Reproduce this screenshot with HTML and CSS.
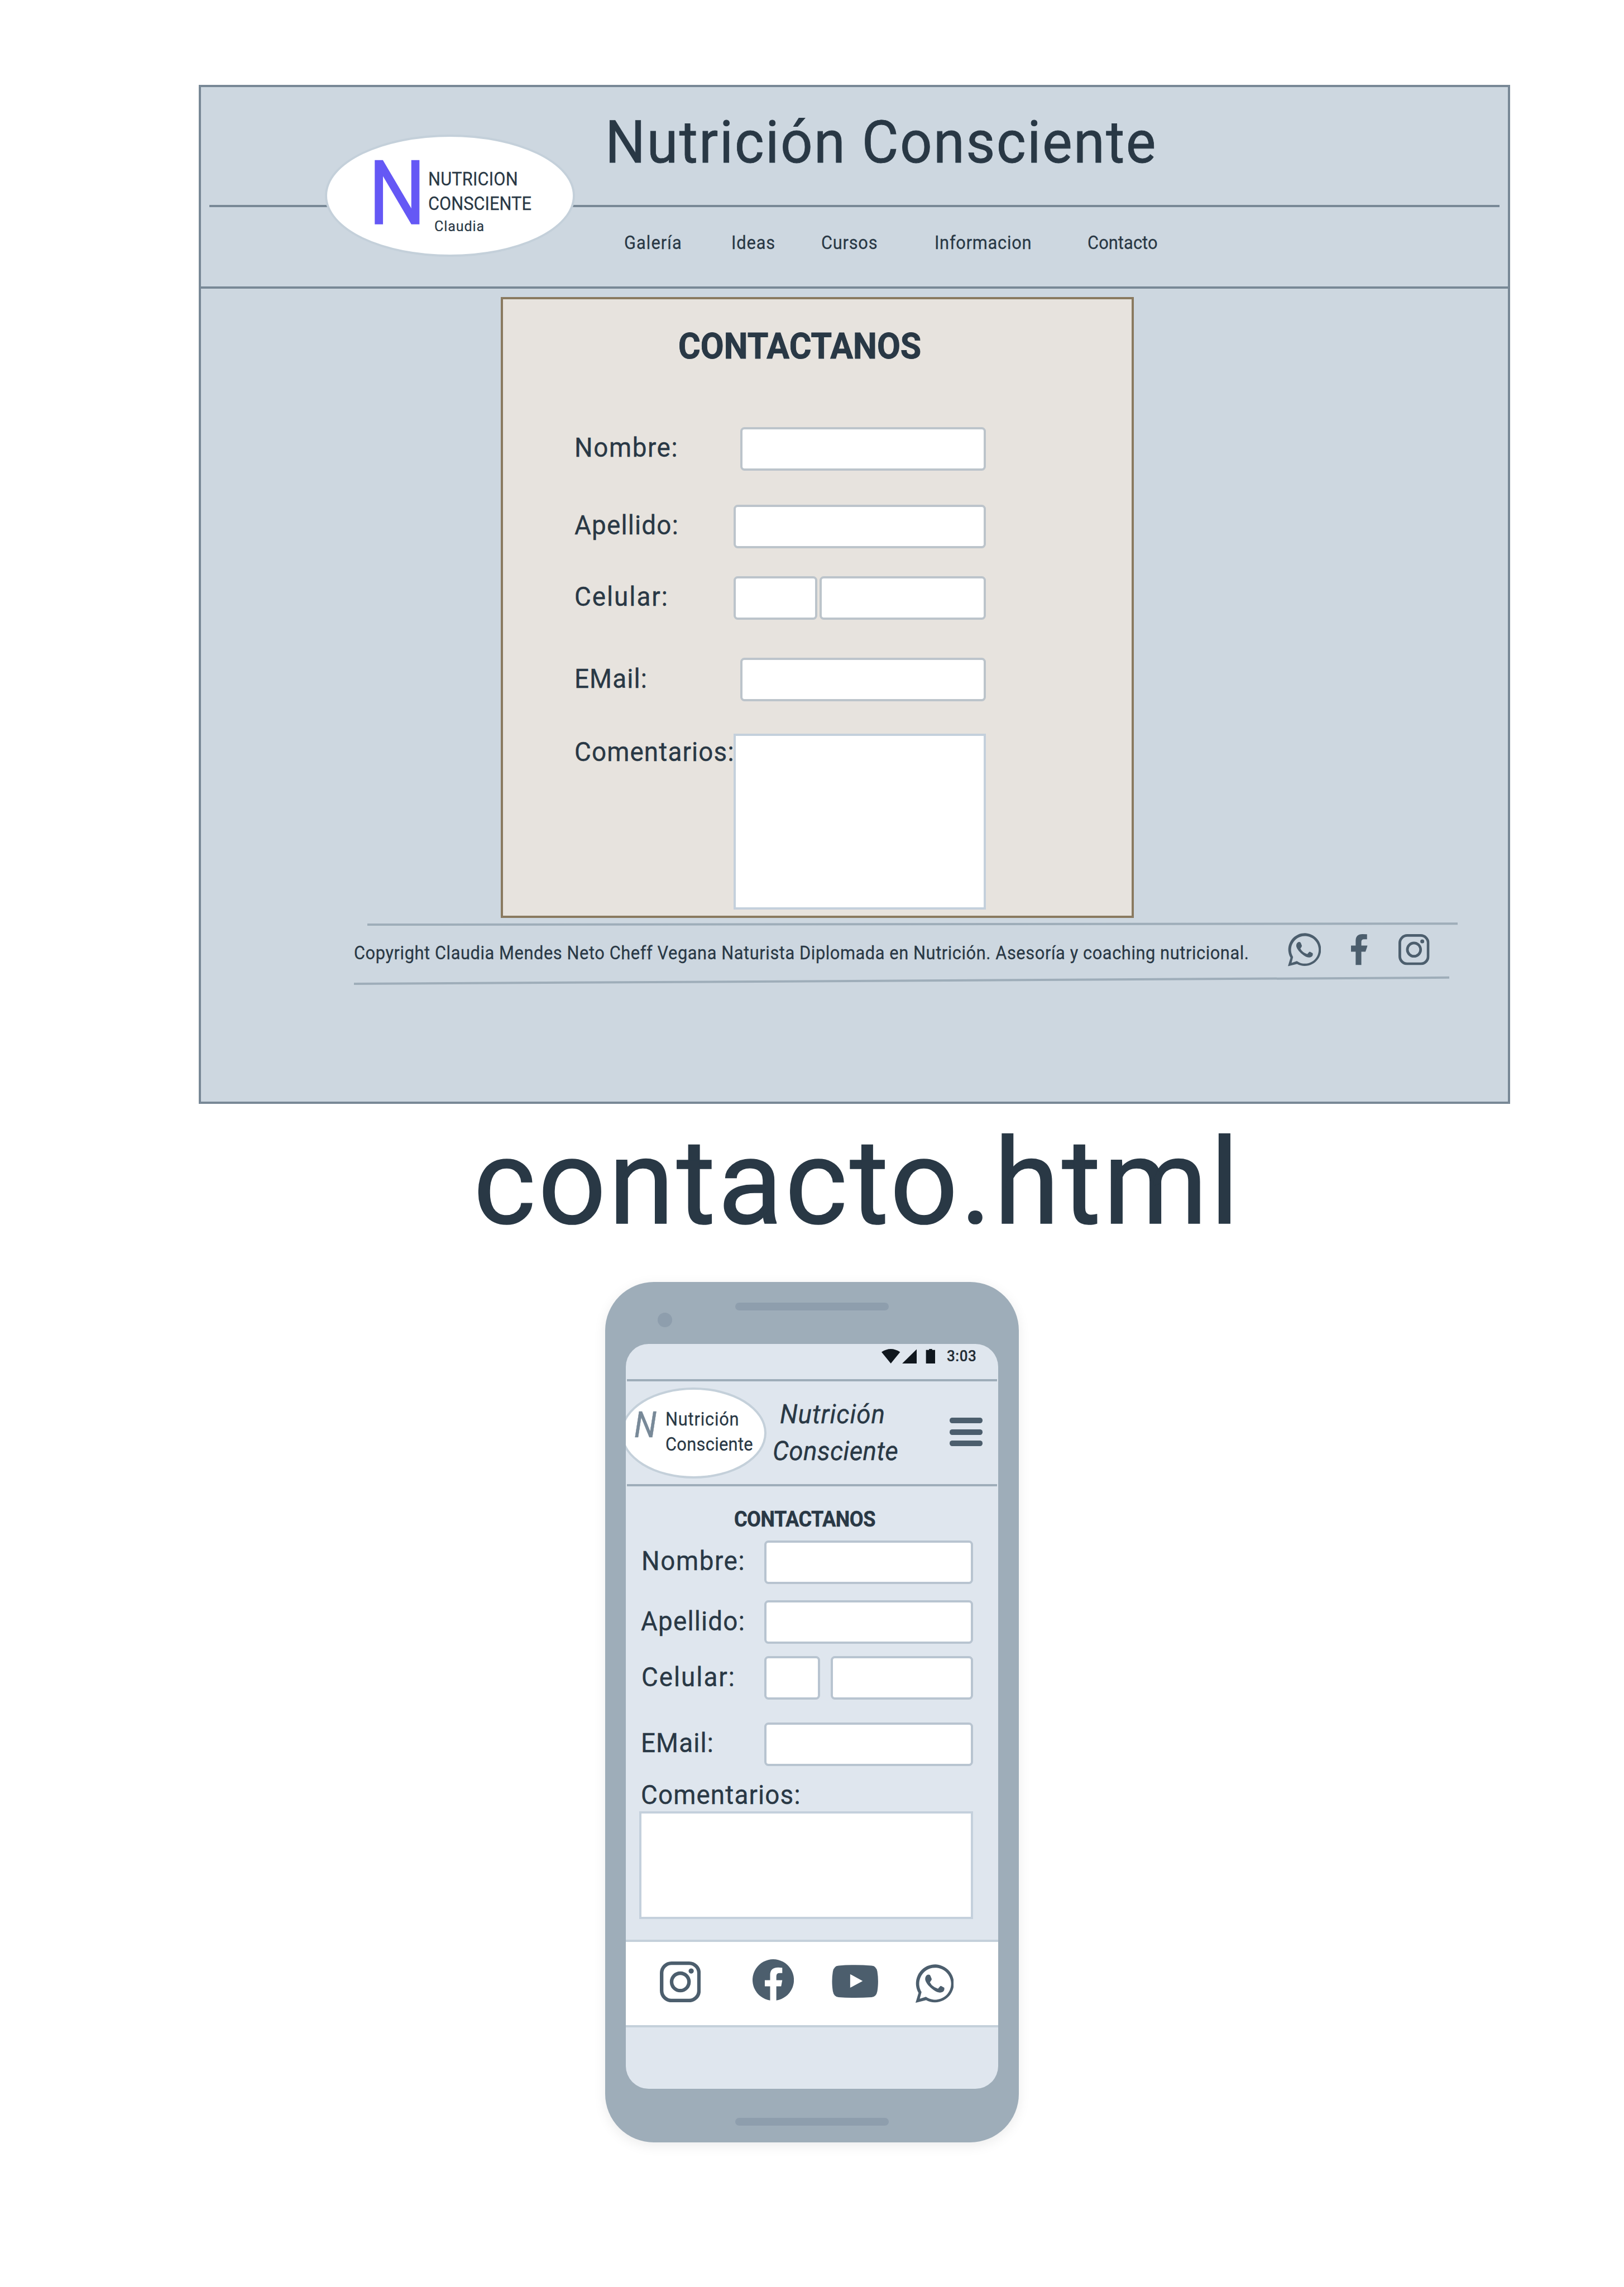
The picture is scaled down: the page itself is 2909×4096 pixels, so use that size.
FILE: index.html
```html
<!DOCTYPE html>
<html lang="es">
<head>
<meta charset="utf-8">
<title>contacto.html</title>
<link rel="stylesheet" href="styles.css">
</head>
<body>
<svg class="symbols" aria-hidden="true">
  <symbol id="whatsapp" viewBox="0 0 64 64.5">
    <path fill-rule="evenodd" d="M0 64.3 5 47.9A31.7 31.7 0 1 1 17.6 60ZM7 57.7 17.3 54.3A26.7 26.7 0 1 0 10 46.5Z"/>
    <path d="M20 17.5Q24 16.3 25 19.5L27 24.5Q27.3 26 24 30 28 38 37.5 40.8L41 36.8Q42 35.8 43.5 36.6L48 39.2Q49 45 44 46.7 38 48.8 30 43 19 35 16.3 26.5 15.3 20 20 17.5Z"/>
  </symbol>
  <symbol id="instagram" viewBox="0 0 60 60">
    <rect x="2.6" y="2.6" width="54.8" height="54.8" rx="14.5" fill="none" stroke="currentColor" stroke-width="5.2"/>
    <circle cx="30" cy="30" r="12.8" fill="none" stroke="currentColor" stroke-width="5.2"/>
    <circle cx="46" cy="14" r="3.8"/>
  </symbol>
  <symbol id="facebook-f" viewBox="0 0 32 60">
    <path d="M9 60V34H0V22H9V13Q9 0 22 0L31 .4V10H25Q20 10 20 15V22H32L28 34H20V60Z"/>
  </symbol>
  <symbol id="facebook" viewBox="0 0 80 80">
    <path d="M34 79.6A40 40 0 1 1 46 79.6V52.3H55.3L57.5 40.5H46V33Q46 26.7 52 26.7H57.5V16.5Q53 15.7 49 15.9 34 16.5 34 30V40.5H23.7V52.3H34Z"/>
  </symbol>
  <symbol id="youtube" viewBox="0 0 90 64">
    <path fill-rule="evenodd" d="M13 1.5Q45-1 77 1.5 86 2 88 13 91 32 88 51 86 62 77 62.5 45 65 13 62.5 4 62 2 51-1 32 2 13 4 2 13 1.5ZM35.5 18V44.3L59.7 31.3Z"/>
  </symbol>
</svg>

<section class="desktop">
  <header class="site-header">
    <div class="title-row"><h1 class="site-title"><span>Nutrición Consciente</span></h1></div>
    <nav class="nav">
      <a class="n1">Galería</a>
      <a class="n2">Ideas</a>
      <a class="n3">Cursos</a>
      <a class="n4">Informacion</a>
      <a class="n5">Contacto</a>
    </nav>
    <div class="logo">
      <span class="logo-mark">N</span>
      <div class="logo-text">
        <div><span class="logo-1">NUTRICION</span></div>
        <div><span class="logo-2">CONSCIENTE</span></div>
        <div class="logo-sub"><span>Claudia</span></div>
      </div>
    </div>
  </header>
  <form class="card">
    <h2 class="card-title"><span>CONTACTANOS</span></h2>
    <div class="row"><label><span class="t-nombre">Nombre:</span></label><i class="field inset"></i></div>
    <div class="row row-2"><label><span class="t-apellido">Apellido:</span></label><i class="field"></i></div>
    <div class="row row-3"><label><span class="t-celular">Celular:</span></label><div class="phone-fields"><i class="field"></i><i class="field"></i></div></div>
    <div class="row row-4"><label><span class="t-email">EMail:</span></label><i class="field inset"></i></div>
    <div class="row row-5"><label><span class="t-comentarios">Comentarios:</span></label><i class="area"></i></div>
  </form>
  <footer class="site-footer">
    <div class="rule rule-top"></div>
    <div class="footer-row">
      <p class="copyright"><span>Copyright Claudia Mendes Neto Cheff Vegana Naturista Diplomada en Nutrición. Asesoría y coaching nutricional.</span></p>
      <svg class="icon f-whatsapp"><use href="#whatsapp"/></svg>
      <svg class="icon f-facebook"><use href="#facebook-f"/></svg>
      <svg class="icon f-instagram"><use href="#instagram"/></svg>
    </div>
    <div class="rule rule-bottom"></div>
  </footer>
</section>

<h2 class="page-name"><span>contacto.html</span></h2>

<section class="phone">
  <i class="camera"></i>
  <i class="speaker"></i>
  <div class="screen">
    <div class="status">
      <svg class="status-icons" viewBox="0 0 104 28">
        <path d="M0 6Q18-6 36 6L18 28ZM40 28 68 .5V28ZM86 2H92V0H98V2H104V28H86Z"/>
      </svg>
      <span class="time">3:03</span>
    </div>
    <header class="m-header">
      <div class="m-logo">
        <span class="m-mark">N</span>
        <div class="m-name">
          <div><span class="m-name-1">Nutrición</span></div>
          <div><span class="m-name-2">Consciente</span></div>
        </div>
      </div>
      <div class="m-title">
        <div class="m-title-1"><span>Nutrición</span></div>
        <div class="m-title-2"><span>Consciente</span></div>
      </div>
      <div class="menu"><i></i><i></i><i></i></div>
    </header>
    <form class="m-form">
      <h3 class="m-form-title"><span>CONTACTANOS</span></h3>
      <div class="m-row"><label><span class="t-nombre">Nombre:</span></label><i class="field"></i></div>
      <div class="m-row m-row-2"><label><span class="t-apellido">Apellido:</span></label><i class="field"></i></div>
      <div class="m-row m-row-3"><label><span class="t-celular">Celular:</span></label><div class="m-phone-fields"><i class="field"></i><i class="field"></i></div></div>
      <div class="m-row m-row-4"><label><span class="t-email">EMail:</span></label><i class="field"></i></div>
      <label class="m-comments"><span class="t-comentarios">Comentarios:</span></label>
      <i class="area m-area"></i>
    </form>
    <footer class="m-footer">
      <svg class="icon m-instagram"><use href="#instagram"/></svg>
      <svg class="icon m-facebook"><use href="#facebook"/></svg>
      <svg class="icon m-youtube"><use href="#youtube"/></svg>
      <svg class="icon m-whatsapp"><use href="#whatsapp"/></svg>
    </footer>
  </div>
  <i class="speaker speaker-bottom"></i>
</section>
</body>
</html>
```
FILE: styles.css
```css
html {
  font-size: 92.64px;
}

* {
  box-sizing: border-box;
}

body {
  margin: 0;
  padding: 1.64rem 0 0 3.84rem;
  min-height: 100vh;
  background: #fff;
  color: #293845;
  font-family: "Roboto", sans-serif;
  line-height: 1;
  overflow: hidden;
}

h1, h2, h3, p {
  margin: 0;
  font-weight: 400;
}

label {
  white-space: nowrap;
}

span, a {
  display: inline-block;
  white-space: nowrap;
  transform: scaleX(.95);
  transform-origin: 0 0;
  -webkit-text-stroke: .008em currentColor;
}

i {
  display: block;
}

.symbols {
  position: absolute;
  width: 0;
  height: 0;
}

.icon {
  flex: none;
  display: block;
  color: #4c5e6d;
  fill: #4c5e6d;
}

/* Desktop frame */
.desktop {
  width: 25.36rem;
  height: 19.7rem;
  border: 4px solid #788896;
  background: #cdd7e0;
}

.site-header {
  position: relative;
  height: 3.9rem;
  border-bottom: 4px solid #788896;
}

.title-row {
  height: 2.32rem;
  margin: 0 .16rem;
  padding: .497rem 0 0 7.655rem;
  border-bottom: 4px solid #788896;
}

.site-title {
  font-size: 1.15rem;
  letter-spacing: .0232em;
}

.nav {
  display: grid;
  grid-template-columns: 2.071rem 1.734rem 2.19rem 2.965rem auto;
  justify-items: start;
  padding: .524rem 0 0 8.188rem;
  font-size: .35rem;
}

.n1 { letter-spacing: .035em; }
.n2 { letter-spacing: .0286em; }
.n3 { letter-spacing: .0247em; }
.n4 { letter-spacing: .0244em; }
.n5 { letter-spacing: .003em; }

.logo {
  position: absolute;
  left: 2.4rem;
  top: .92rem;
  display: flex;
  width: 4.84rem;
  height: 2.36rem;
  padding-left: .8rem;
  border: 4px solid #c4d0da;
  border-radius: 50%;
  background: #fff;
}

.logo-mark {
  width: 1.157rem;
  margin-top: .246rem;
  color: #6558f5;
  font-size: 1.716rem;
  transform: scaleX(.907);
}

.logo-text {
  margin-top: .58rem;
  font-size: .35rem;
  line-height: .48rem;
}

.logo-1 { letter-spacing: .0059em; }
.logo-2 { letter-spacing: .0008em; }

.logo-sub {
  margin: .045rem 0 0 .12rem;
  font-size: .285rem;
  letter-spacing: .0352em;
  line-height: 1;
}

/* Contact card */
.card {
  width: 12.24rem;
  height: 12rem;
  margin: .16rem 0 0 5.8rem;
  padding-left: 1.375rem;
  border: 4px solid #8a7a60;
  background: #e7e3de;
}

.card-title {
  padding: .572rem 0 0 2.01rem;
  font-size: .69rem;
  font-weight: 700;
  letter-spacing: .0013em;
}

.card-title span,
.m-form-title span {
  -webkit-text-stroke-width: .014em;
}

.row {
  display: grid;
  grid-template-columns: 3.08rem 4.88rem;
  margin-top: 1.213rem;
}

.row-2 { margin-top: .66rem; }
.row-3 { margin-top: .54rem; }
.row-4 { margin-top: .74rem; }
.row-5 { margin-top: .62rem; }

label {
  display: block;
  padding-top: .142rem;
  font-size: .52rem;
}

.row label {
  padding-left: .01rem;
}

.row-5 label {
  padding-top: .102rem;
}

.t-nombre { letter-spacing: .035em; }
.t-apellido { letter-spacing: .0262em; }
.t-celular { letter-spacing: .0433em; }
.t-email { letter-spacing: .0245em; }
.t-comentarios { letter-spacing: .0252em; }

.field {
  height: .84rem;
  border: 4px solid #bcc4cb;
  border-radius: .08rem;
  background: #fff;
}

.inset {
  margin-left: .13rem;
}

.phone-fields {
  display: grid;
  grid-template-columns: 1.62rem 3.22rem;
  gap: .04rem;
}

.area {
  height: 3.4rem;
  border: 4px solid #c4d0dc;
  background: #fff;
}

/* Desktop footer */
.site-footer {
  padding: .114rem 0 0 2.96rem;
}

.rule {
  height: 4px;
  background: #9eadb9;
  transform-origin: left center;
}

.rule-top {
  width: 21.08rem;
  margin-left: .26rem;
  transform: skewY(-.054deg);
}

.rule-bottom {
  width: 21.18rem;
  transform: skewY(-.325deg);
}

.footer-row {
  display: flex;
  align-items: flex-start;
  height: 1.1rem;
}

.copyright {
  width: 18.06rem;
  padding-top: .351rem;
  font-size: .35rem;
  letter-spacing: .0188em;
}

.f-whatsapp {
  width: .64rem;
  height: .645rem;
  margin-top: .137rem;
}

.f-facebook {
  width: .32rem;
  height: .6rem;
  margin: .162rem .6rem 0 .58rem;
}

.f-instagram {
  width: .6rem;
  height: .6rem;
  margin-top: .162rem;
}

.page-name {
  margin: .38rem 0 0 5.315rem;
  font-size: 2.3rem;
  letter-spacing: .0205em;
}

.page-name span {
  transform: none;
}

/* Phone */
.phone {
  position: relative;
  width: 8rem;
  height: 16.64rem;
  margin: .76rem 0 0 7.86rem;
  padding: 1.2rem .4rem 0;
  border-radius: .94rem;
  background: #9eadb9;
  box-shadow: 0 .06rem .24rem rgba(0, 0, 0, .08);
}

.camera {
  position: absolute;
  left: 1.02rem;
  top: .6rem;
  width: .28rem;
  height: .28rem;
  border-radius: 50%;
  background: #8e9ead;
}

.speaker {
  position: absolute;
  left: 2.52rem;
  top: .4rem;
  width: 2.96rem;
  height: .16rem;
  border-radius: .08rem;
  background: #8e9ead;
}

.speaker-bottom {
  top: 16.16rem;
}

.screen {
  height: 14.4rem;
  overflow: hidden;
  border-radius: .44rem;
  background: #dfe6ee;
}

.status {
  display: flex;
  height: .68rem;
  padding-left: 4.94rem;
}

.status-icons {
  width: 1.04rem;
  height: .28rem;
  margin-top: .1rem;
  fill: #10171e;
}

.time {
  margin: .104rem 0 0 .225rem;
  color: #222c35;
  font-size: .295rem;
  font-weight: 500;
  letter-spacing: .0212em;
}

.m-header {
  position: relative;
  display: flex;
  height: 2.08rem;
  margin: 0 .02rem;
  border: solid #9eadb9;
  border-width: 4px 0;
}

.m-logo {
  flex: none;
  display: flex;
  width: 2.82rem;
  height: 1.76rem;
  margin: .12rem 0 0 -.12rem;
  padding-left: .22rem;
  border: 4px solid #c4d0da;
  border-radius: 50%;
  background: #fff;
}

.m-mark {
  flex: none;
  width: .605rem;
  margin-top: .331rem;
  color: #788998;
  font-size: .7rem;
  font-style: italic;
  transform: scaleX(.893);
}

.m-name {
  margin-top: .34rem;
  font-size: .35rem;
  line-height: .48rem;
}

.m-name-1 { letter-spacing: .0262em; }
.m-name-2 { letter-spacing: .0102em; }

.m-title {
  flex: none;
  width: 3.42rem;
  margin: .281rem 0 0 .12rem;
  font-size: .52rem;
  font-style: italic;
  line-height: .72rem;
}

.m-title-1 {
  padding-left: .14rem;
  letter-spacing: .0208em;
}

.m-title-2 {
  letter-spacing: .0077em;
}

.menu {
  display: grid;
  align-content: start;
  gap: .11rem;
  width: .64rem;
  margin-top: .706rem;
}

.menu i {
  height: .11rem;
  border-radius: .05rem;
  background: #4c5e6d;
}

/* Mobile form */
.m-form {
  height: 8.76rem;
  padding-left: .29rem;
}

.m-form .field {
  border-color: #b8c4d0;
}

.m-form .t-nombre,
.m-form .t-celular {
  margin-left: .017rem;
}

.m-form-title {
  padding: .426rem 0 0 1.8rem;
  font-size: .41rem;
  font-weight: 700;
  letter-spacing: -.0132em;
}

.m-row {
  display: grid;
  grid-template-columns: 2.39rem 4.04rem;
  margin-top: .206rem;
}

.m-row-2 { margin-top: .32rem; }
.m-row-3 { margin-top: .24rem; }
.m-row-4 { margin-top: .44rem; }

.m-phone-fields {
  display: grid;
  grid-template-columns: 1.08rem 2.76rem;
  gap: .2rem;
}

.m-comments {
  padding-top: .3rem;
}

.m-area {
  width: 6.46rem;
  height: 2.08rem;
  margin: .06rem 0 0 -.03rem;
}

.m-footer {
  display: flex;
  align-items: flex-start;
  height: 1.7rem;
  padding-left: .66rem;
  border: solid #c4d0da;
  border-width: 4px 0;
  background: #fff;
}

.m-instagram {
  width: .79rem;
  height: .79rem;
  margin-top: .375rem;
}

.m-facebook {
  width: .8rem;
  height: .8rem;
  margin: .34rem 0 0 1.006rem;
}

.m-youtube {
  width: .9rem;
  height: .64rem;
  margin: .448rem 0 0 .724rem;
}

.m-whatsapp {
  width: .74rem;
  height: .746rem;
  margin: .436rem 0 0 .72rem;
}
```
